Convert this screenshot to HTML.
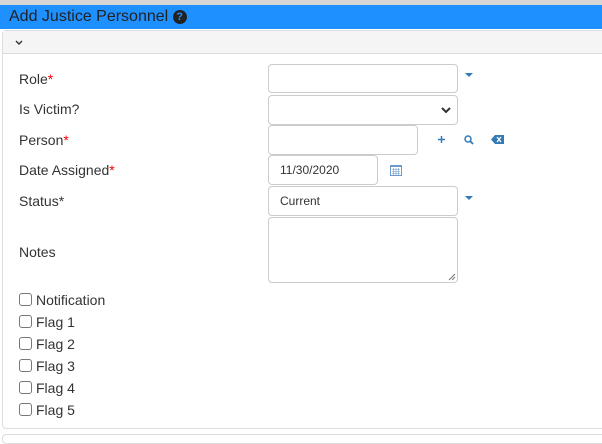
<!DOCTYPE html>
<html><head><style>
*{box-sizing:border-box}
body{margin:0;width:602px;height:439px;background:#fff;font-family:"Liberation Sans",sans-serif;font-size:14px;color:#333;position:relative;overflow:hidden}
.a{position:absolute}
.top{left:0;top:0;width:602px;height:5px;background:#d6d6d6}
.hdr{left:0;top:5px;width:602px;height:24px;background:#1e90ff;color:#222;font-size:16px;line-height:24px;padding-left:9px}
.panel{left:2px;top:30px;width:610px;height:399px;border:1px solid #ddd;border-radius:4px}
.ph{left:3px;top:31px;width:600px;height:23px;background:#f5f5f5;border-bottom:1px solid #ddd}
.lbl{left:19px;font-size:14px}
.req{color:#e00}
.in{left:268px;border:1px solid #ccc;border-radius:4px;background:#fff;font-size:12px;line-height:26px;padding-left:11px}
.cb{left:19px;width:13px;height:13px;border:1px solid #777;border-radius:3px}
.cl{left:36px;font-size:14px}
</style></head><body>
<div class="a top"></div>
<div class="a hdr">Add Justice Personnel <span style="display:inline-block;width:14px;height:14px;border-radius:50%;background:#222;color:#1e90ff;font-size:11px;line-height:14px;text-align:center;font-weight:bold;vertical-align:1px">?</span></div>
<div class="a panel"></div>
<div class="a ph"><svg class="a" style="left:12px;top:9px" width="8" height="6"><path d="M1 1l3 3 3-3" stroke="#333" stroke-width="1.4" fill="none"/></svg></div>
<div class="a lbl" style="top:71px">Role<span class="req">*</span></div>
<div class="a lbl" style="top:101px">Is Victim?</div>
<div class="a lbl" style="top:132px">Person<span class="req">*</span></div>
<div class="a lbl" style="top:162px">Date Assigned<span class="req">*</span></div>
<div class="a lbl" style="top:193px">Status*</div>
<div class="a lbl" style="top:244px">Notes</div>
<div class="a in" style="top:64px;width:190px;height:29px"></div>
<div class="a in" style="top:95px;width:190px;height:30px"><svg class="a" style="left:172px;top:11px" width="10" height="7"><path d="M1 1l4 4 4-4" stroke="#333" stroke-width="2" fill="none"/></svg></div>
<div class="a in" style="top:125px;width:150px;height:30px"></div>
<div class="a in" style="top:155px;width:110px;height:30px;line-height:28px">11/30/2020</div>
<div class="a in" style="top:186px;width:190px;height:30px;line-height:28px">Current</div>
<div class="a in" style="top:217px;width:190px;height:66px"><svg class="a" style="left:179px;top:55px" width="8" height="8"><path d="M7 1L1 7M7 4L4 7" stroke="#777" stroke-width="1"/></svg></div>
<svg class="a" style="left:465px;top:73px" width="8" height="5"><path d="M0 0h8L4 4z" fill="#337ab7"/></svg>
<svg class="a" style="left:465px;top:196px" width="8" height="5"><path d="M0 0h8L4 4z" fill="#337ab7"/></svg>
<svg class="a" style="left:437px;top:135px" width="9" height="9"><path d="M4.5 1v7M1 4.5h7" stroke="#337ab7" stroke-width="1.5"/></svg>
<svg class="a" style="left:464px;top:135px" width="10" height="10"><circle cx="4" cy="4" r="3" stroke="#337ab7" stroke-width="1.5" fill="none"/><path d="M6 6l3 3" stroke="#337ab7" stroke-width="1.8"/></svg>
<svg class="a" style="left:491px;top:135px" width="13" height="9"><path d="M0 4.5L4 0h9v9H4z" fill="#337ab7"/><path d="M6 2l4 5M10 2l-4 5" stroke="#fff" stroke-width="1.3"/></svg>
<svg class="a" style="left:390px;top:164px" width="12" height="12"><rect x="0.5" y="1.5" width="11" height="10" fill="none" stroke="#6a9bcc"/><rect x="0.5" y="1.5" width="11" height="1.5" fill="#6a9bcc"/><path d="M2 5.5h8M2 7.5h8M2 9.5h8M3.5 4v7M6 4v7M8.5 4v7" stroke="#6a9bcc" stroke-width=".6"/></svg>
<div class="a cb" style="top:293px"></div><div class="a cl" style="top:292px">Notification</div>
<div class="a cb" style="top:315px"></div><div class="a cl" style="top:314px">Flag 1</div>
<div class="a cb" style="top:337px"></div><div class="a cl" style="top:336px">Flag 2</div>
<div class="a cb" style="top:359px"></div><div class="a cl" style="top:358px">Flag 3</div>
<div class="a cb" style="top:381px"></div><div class="a cl" style="top:380px">Flag 4</div>
<div class="a cb" style="top:403px"></div><div class="a cl" style="top:402px">Flag 5</div>
<div class="a" style="left:2px;top:434px;width:610px;height:10px;border:1px solid #ddd;border-radius:4px"></div>
</body></html>
